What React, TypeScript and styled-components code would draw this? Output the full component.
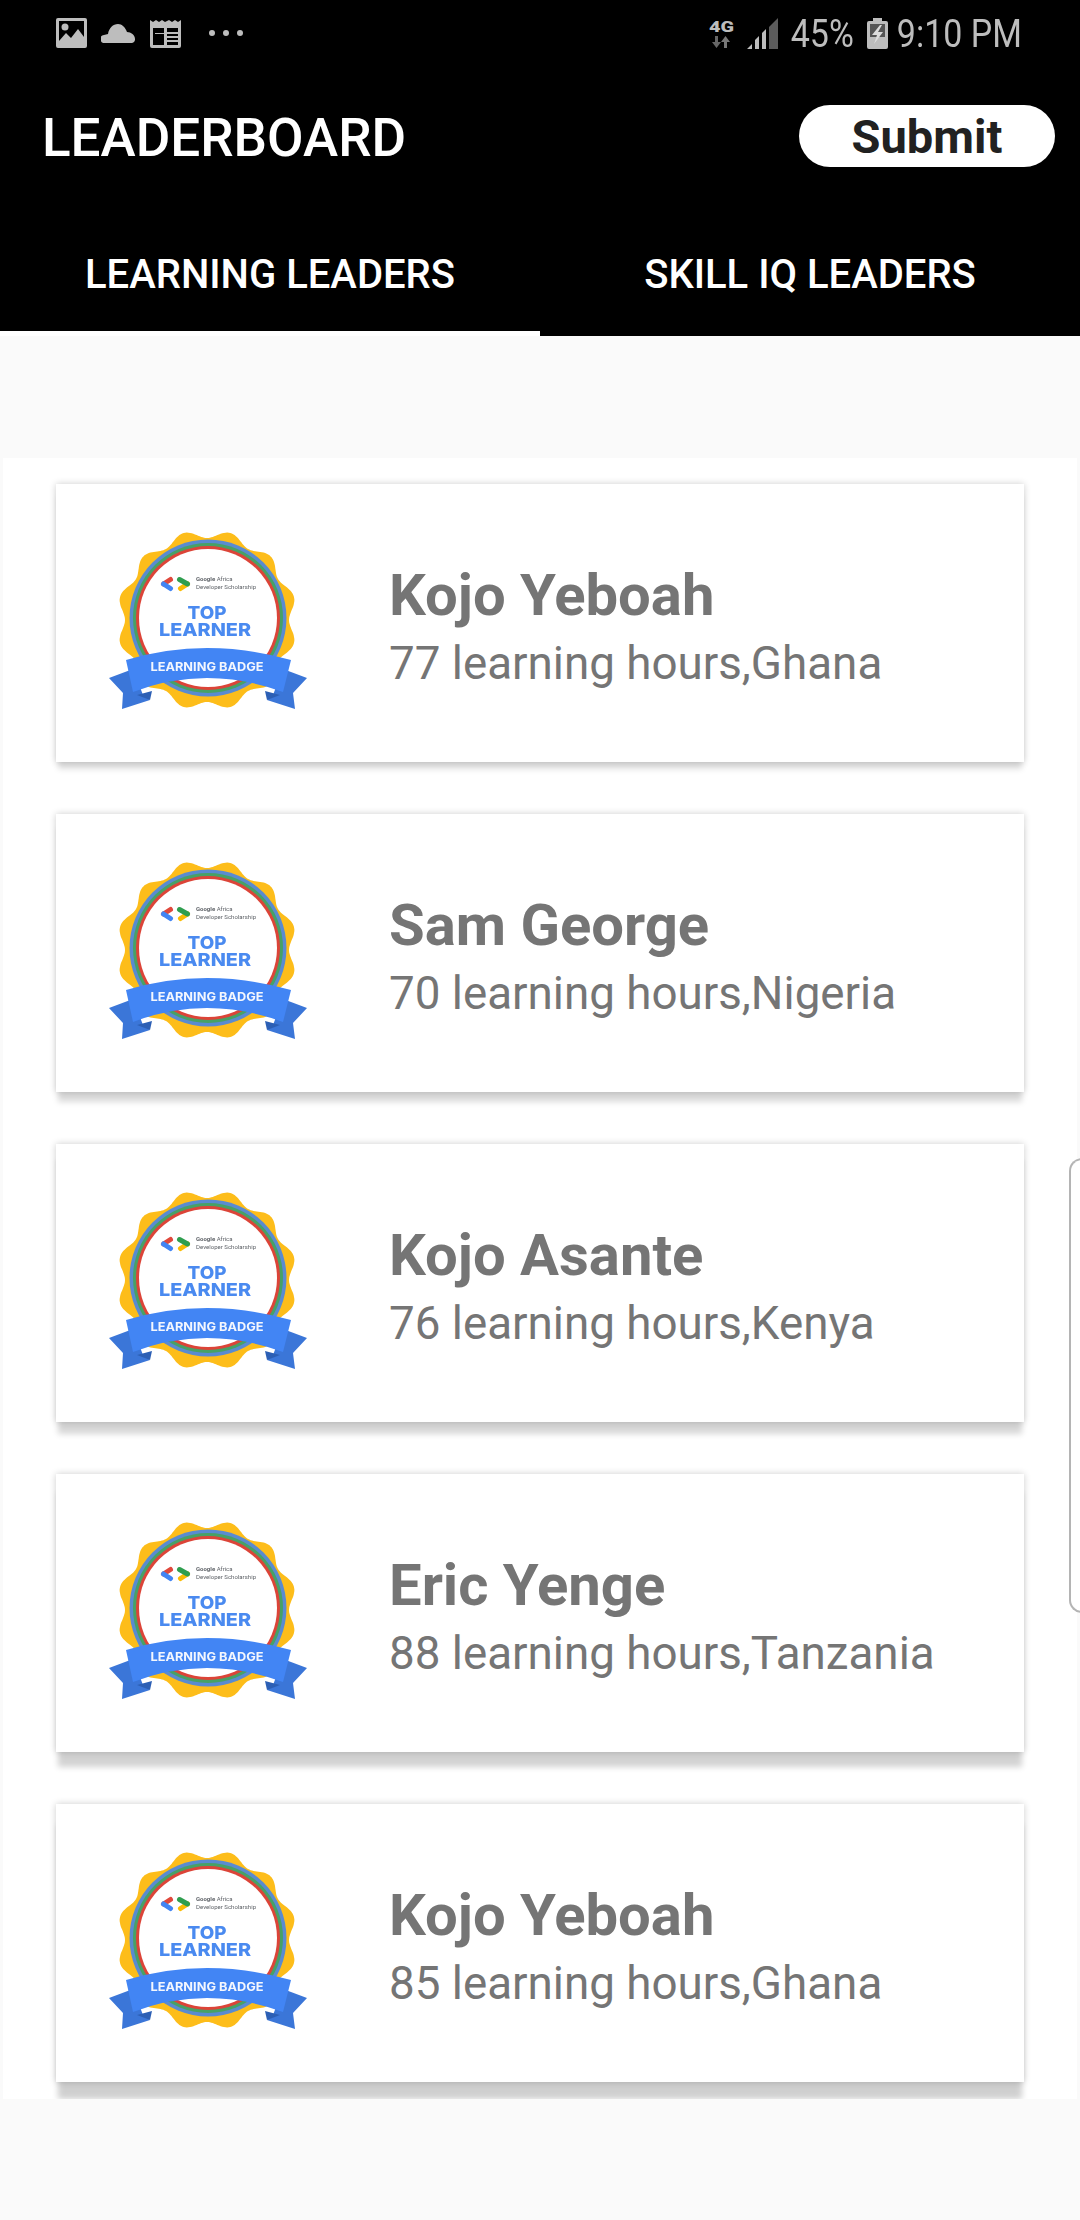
import React from "react";
import styled, { createGlobalStyle } from "styled-components";

const Global = createGlobalStyle`
  html, body { margin: 0; padding: 0; background: #fafafa; font-family: Roboto, "Liberation Sans", sans-serif; overflow: hidden; }
  * { box-sizing: border-box; }
`;

const Page = styled.div`
  position: relative;
  width: 1080px;
  height: 2220px;
  background: #fafafa;
  overflow: hidden;
`;
const Header = styled.header`
  background: #000;
  height: 336px;
  display: flex;
  flex-direction: column;
`;
const StatusBar = styled.div`
  height: 66px;
  display: flex;
  justify-content: space-between;
  align-items: center;
  padding: 0 58px 0 56px;
  color: #bdbdbd;
`;
const StatusGroup = styled.div`
  display: flex;
  align-items: center;
`;
const StatusText = styled.span<{ $left: number }>`
  display: inline-block;
  font-size: 34px;
  line-height: 66px;
  margin-left: ${(p) => p.$left}px;
  font-weight: 400;
  transform: scaleY(1.14);
`;
const StatusIcon = styled.svg<{ $left?: number }>`
  display: block;
  flex: none;
  margin-left: ${(p) => p.$left ?? 0}px;
  fill: #bdbdbd;
`;
const Toolbar = styled.div`
  height: 144px;
  display: flex;
  justify-content: space-between;
  align-items: center;
  padding: 0 25px 0 42px;
`;
const Title = styled.h1`
  margin: 0;
  color: #fff;
  font-size: 53px;
  font-weight: 500;
`;
const SubmitButton = styled.button`
  width: 256px;
  height: 62px;
  margin-bottom: 4px;
  border: 0;
  border-radius: 31px;
  background: #fff;
  color: #212121;
  font-family: inherit;
  font-size: 47px;
  font-weight: 700;
  line-height: 62px;
  padding: 1px 0 0;
`;
const Tabs = styled.nav`
  height: 126px;
  display: flex;
`;
const Tab = styled.div<{ $active?: boolean }>`
  flex: 1;
  display: flex;
  align-items: center;
  justify-content: center;
  padding-top: 8px;
  color: #fff;
  font-size: 40px;
  font-weight: 500;
  border-bottom: 5px solid ${(p) => (p.$active ? "#fff" : "#000")};
`;
const Panel = styled.main`
  margin: 122px 3px 0;
  height: 1641px;
  background: #fff;
  overflow: hidden;
  display: flex;
  flex-direction: column;
  gap: 52px;
  padding: 26px 53px 0;
`;
const Card = styled.article<{ $depth: number }>`
  flex: none;
  height: 278px;
  display: flex;
  align-items: flex-start;
  padding: 26px 0 0 34px;
  background: #fff;
  box-shadow: 0 ${(p) => 9 + p.$depth * 2.5}px 6px -2px rgba(0, 0, 0, ${(p) => 0.13 + p.$depth * 0.015}),
    0 0 7px rgba(0, 0, 0, 0.2);
`;
const BadgeArt = styled.svg`
  flex: none;
  display: block;
  filter: blur(0.6px);
`;
const Info = styled.div`
  margin: 46px 0 0 59px;
  display: flex;
  flex-direction: column;
`;
const Name = styled.div`
  color: #757575;
  font-size: 58px;
  font-weight: 700;
  line-height: 78px;
`;
const Detail = styled.div`
  color: #757575;
  font-size: 45.75px;
  font-weight: 400;
  line-height: 60px;
`;
const EdgeHandle = styled.div`
  position: absolute;
  left: 1069px;
  top: 1158px;
  width: 14px;
  height: 455px;
  border: 2px solid #b4b4b4;
  border-right: 0;
  border-radius: 13px 0 0 13px;
  background: #fff;
`;

function scallop(cx: number, cy: number) {
  const pts: string[] = [];
  for (let i = 0; i < 360; i++) {
    const t = (i * Math.PI) / 180;
    const r = 86 - 4 * Math.cos(12 * t);
    pts.push(`${(cx + r * Math.sin(t)).toFixed(1)},${(cy - r * Math.cos(t)).toFixed(1)}`);
  }
  return pts.join(" ");
}

const Badge = () => (
  <BadgeArt width={240} height={220} viewBox="0 0 240 220" aria-hidden="true">
    <polygon points={scallop(117, 110)} fill="#fdbd1a" />
    <circle cx="118" cy="108" r="78.500" fill="#5a8bd0" />
    <circle cx="118" cy="108" r="75" fill="#47a166" />
    <circle cx="118" cy="108" r="72" fill="#dc4438" />
    <circle cx="118" cy="108" r="69" fill="#fff" />
    <path d="M80.500 69.500L73.500 74" fill="none" stroke="#e0483c" strokeWidth="5" strokeLinecap="round" />
    <path d="M73.500 74l7 4.500" fill="none" stroke="#4285f4" strokeWidth="5" strokeLinecap="round" />
    <path d="M97.500 74l-7 4.500" fill="none" stroke="#fbbc04" strokeWidth="5" strokeLinecap="round" />
    <path d="M89.500 69.500l8 4.500" fill="none" stroke="#2f9e4f" strokeWidth="5" strokeLinecap="round" />
    <text x="106" y="71" fontFamily="Roboto, sans-serif" fontSize="6" fontWeight="700" fill="#5f6368">
      Google <tspan fontWeight="400">Africa</tspan>
    </text>
    <text x="106" y="79" fontFamily="Roboto, sans-serif" fontSize="6" fill="#5f6368" textLength="60">
      Developer Scholarship
    </text>
    <text x="117" y="109" textAnchor="middle" fontFamily="Inter, sans-serif" fontSize="18" fontWeight="800" fill="#4a8af0" textLength="39" lengthAdjust="spacingAndGlyphs">
      TOP
    </text>
    <text x="115" y="126" textAnchor="middle" fontFamily="Inter, sans-serif" fontSize="18" fontWeight="800" fill="#4a8af0" textLength="92" lengthAdjust="spacingAndGlyphs">
      LEARNER
    </text>
    <path d="M19 168l24-9 10 26 7 5-28 9 1-16z" fill="#3b76d8" />
    <path d="M217 168l-24-9-10 26-6 5 28 9-2-16z" fill="#3b76d8" />
    <path d="M47 185l13 5 2-9z" fill="#2c5fb5" />
    <path d="M190 185l-13 5-2-9z" fill="#2c5fb5" />
    <path d="M36 150Q116 126 201 150L193 182Q116 154 43 182Z" fill="#4285f4" />
    <text x="117" y="161" textAnchor="middle" fontFamily="Inter, sans-serif" fontSize="11.500" fontWeight="700" fill="#f4f7fe" textLength="113" lengthAdjust="spacingAndGlyphs">
      LEARNING BADGE
    </text>
  </BadgeArt>
);

const leaders = [
  { name: "Kojo Yeboah", detail: "77 learning hours,Ghana" },
  { name: "Sam George", detail: "70 learning hours,Nigeria" },
  { name: "Kojo Asante", detail: "76 learning hours,Kenya" },
  { name: "Eric Yenge", detail: "88 learning hours,Tanzania" },
  { name: "Kojo Yeboah", detail: "85 learning hours,Ghana" },
];

export default function App() {
  return (
    <Page>
      <Global />
      <Header>
        <StatusBar>
          <StatusGroup>
            <StatusIcon width={31} height={30} viewBox="0 0 31 30">
              <path fillRule="evenodd" d="M2 0h27a2 2 0 0 1 2 2v26a2 2 0 0 1-2 2H2a2 2 0 0 1-2-2V2a2 2 0 0 1 2-2zm1 3v20l7-8 5 5 7-9 6 8V3z" />
              <circle cx="9" cy="9" r="3.500" />
            </StatusIcon>
            <StatusIcon $left={14} width={34} height={19} viewBox="0 0 34 19">
              <path d="M4 19a4 4 0 0 1-1-8l4-1C8 4 12 0 17 0c4 0 7 3 9 8 4 0 8 3 8 7a4 4 0 0 1-3 4z" />
            </StatusIcon>
            <StatusIcon $left={15} width={31} height={29} viewBox="0 0 31 29">
              <path fillRule="evenodd" d="M0 1l3 2 3-2 3 2 3-2 3 2 4-2 3 2 3-2 3 2 3-2v26a2 2 0 0 1-2 2H2a2 2 0 0 1-2-2zM3 9v17h11V15H5v-1h9V9zm14 6v2h11v-2zm0 4v2h11v-2zm0 4v3h11v-3zM17 9v4h11V9z" />
            </StatusIcon>
            <StatusIcon $left={28} width={34} height={8} viewBox="0 0 34 8">
              <circle cx="3" cy="4" r="3" />
              <circle cx="17" cy="4" r="3" />
              <circle cx="31" cy="4" r="3" />
            </StatusIcon>
          </StatusGroup>
          <StatusGroup>
            <StatusIcon width={25} height={30} viewBox="0 0 25 30">
              <text x="0" y="14" fontFamily="Roboto, sans-serif" fontSize="15" fontWeight="900" fill="#bdbdbd" textLength="25" lengthAdjust="spacingAndGlyphs">4G</text>
              <path d="M6 18h3v6h3l-4.500 6-4.500-6h3z" fill="#666" />
              <path d="M15 30h3v-6h3l-4.500-6-4.500 6h3z" fill="#777" />
            </StatusIcon>
            <StatusIcon $left={13} width={31} height={31} viewBox="0 0 31 31">
              <path d="M0 31l5-5v5zM8 31v-9l4-4v13zM15 31V15l4-4v20z" />
              <path d="M22 31V9l9-9v31z" fill="#5c5c5c" />
            </StatusIcon>
            <StatusText $left={13}>45%</StatusText>
            <StatusIcon $left={13} width={21} height={31} viewBox="0 0 21 31">
              <path fillRule="evenodd" d="M6 0h9v3h4a2 2 0 0 1 2 2v24a2 2 0 0 1-2 2H2a2 2 0 0 1-2-2V5a2 2 0 0 1 2-2h4z" />
              <path d="M3 6h15v13H3z" fill="#555" />
              <path d="M13 7l-8 10h5l-3 9 9-12h-5l4-7z" fill="#dcdcdc" />
            </StatusIcon>
            <StatusText $left={9}>9:10 PM</StatusText>
          </StatusGroup>
        </StatusBar>
        <Toolbar>
          <Title>LEADERBOARD</Title>
          <SubmitButton>Submit</SubmitButton>
        </Toolbar>
        <Tabs>
          <Tab $active>LEARNING LEADERS</Tab>
          <Tab>SKILL IQ LEADERS</Tab>
        </Tabs>
      </Header>
      <Panel>
        {leaders.map((l, i) => (
          <Card key={i} $depth={i}>
            <Badge />
            <Info>
              <Name>{l.name}</Name>
              <Detail>{l.detail}</Detail>
            </Info>
          </Card>
        ))}
      </Panel>
      <EdgeHandle />
    </Page>
  );
}
